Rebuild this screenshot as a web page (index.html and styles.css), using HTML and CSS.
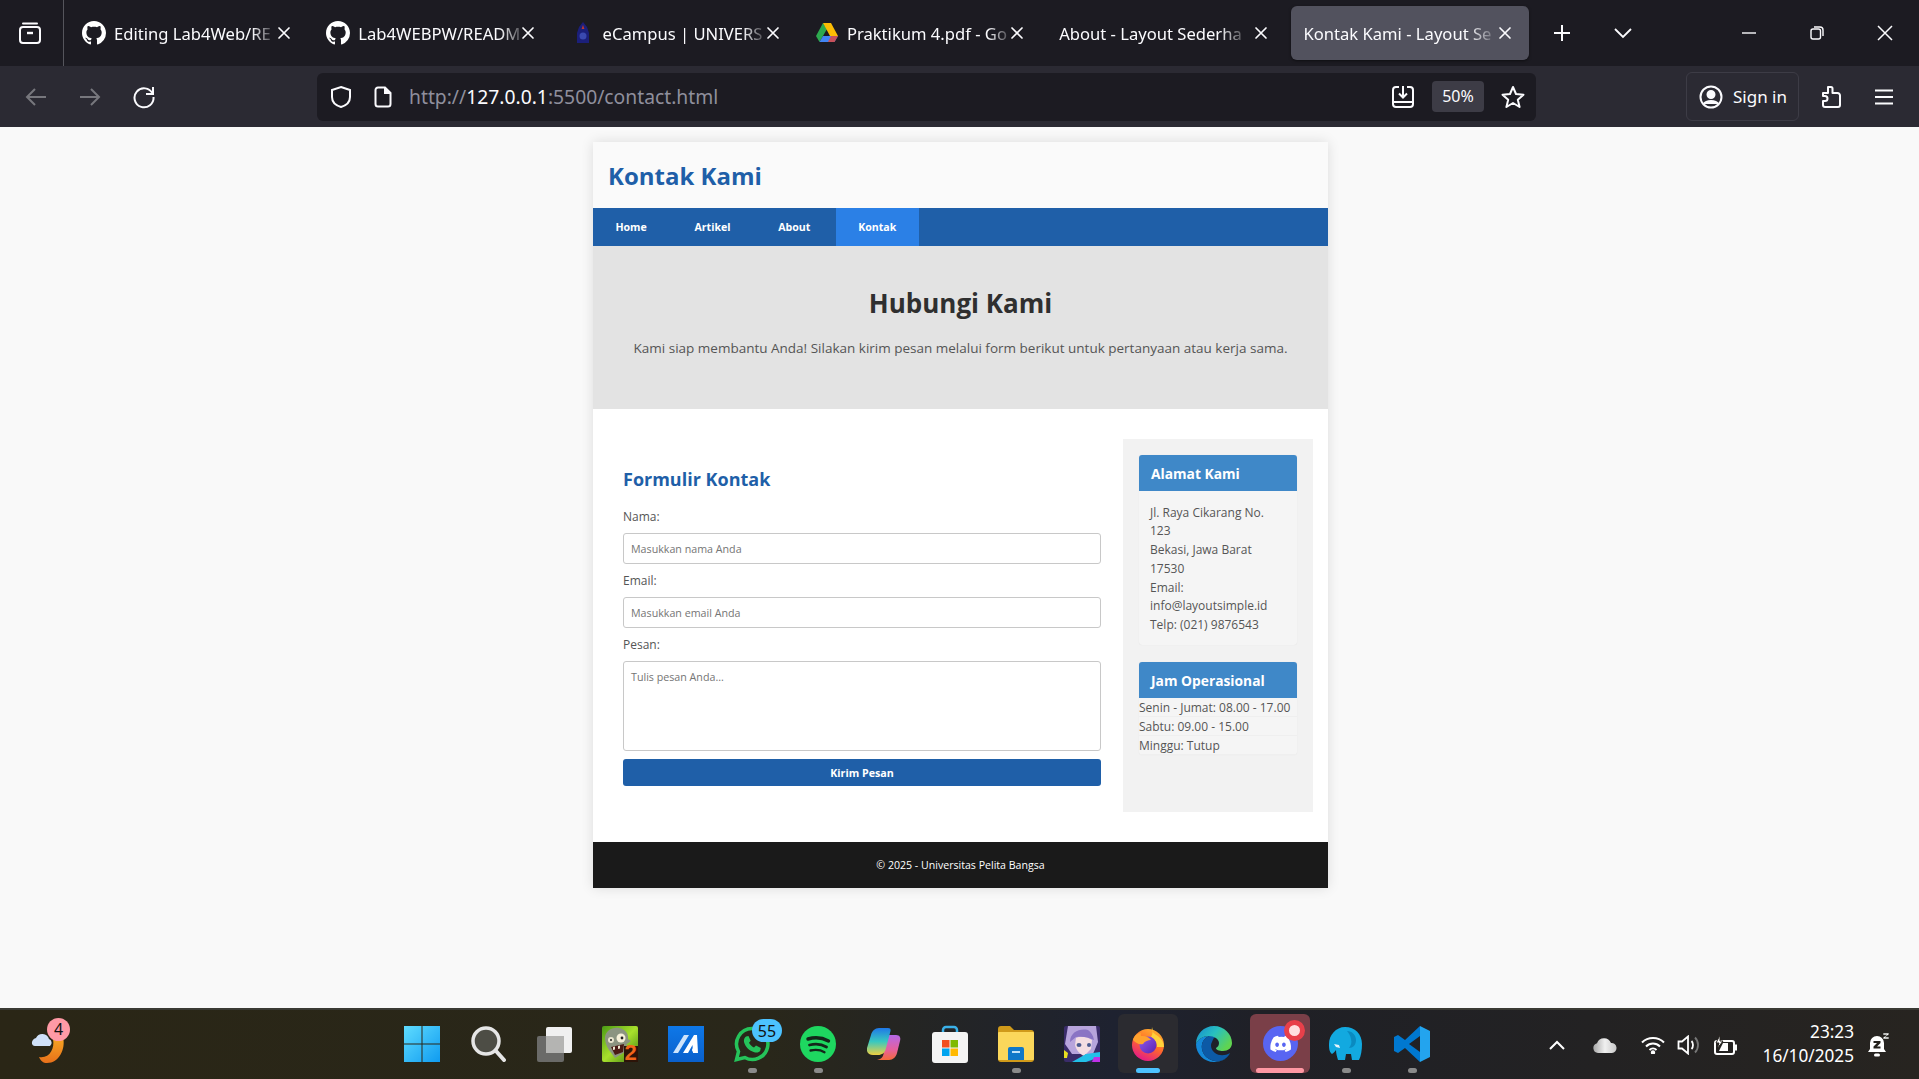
FILE: index.html
```html
<!DOCTYPE html>
<html lang="id">

<head>
    <meta charset="UTF-8">
    <meta name="viewport" content="width=device-width, initial-scale=1.0">
    <title>Kontak Kami - Layout Sederhana</title>
    <link rel="stylesheet" href="styles.css">
</head>

<body>
    <svg class="sprite" width="0" height="0">
        <symbol id="gh" viewBox="0 0 16 16">
            <path fill="#fff" d="M8 0C3.58 0 0 3.58 0 8c0 3.54 2.29 6.53 5.47 7.59.4.07.55-.17.55-.38 0-.19-.01-.82-.01-1.49-2.01.37-2.53-.49-2.69-.94-.09-.23-.48-.94-.82-1.13-.28-.15-.68-.52-.01-.53.63-.01 1.08.58 1.23.82.72 1.21 1.87.87 2.33.66.07-.52.28-.87.51-1.07-1.78-.2-3.64-.89-3.64-3.95 0-.87.31-1.59.82-2.15-.08-.2-.36-1.02.08-2.12 0 0 .67-.21 2.2.82.64-.18 1.32-.27 2-.27.68 0 1.36.09 2 .27 1.53-1.04 2.2-.82 2.2-.82.44 1.1.16 1.92.08 2.12.51.56.82 1.27.82 2.15 0 3.07-1.87 3.75-3.65 3.95.29.25.54.73.54 1.48 0 1.07-.01 1.93-.01 2.2 0 .21.15.46.55.38A8.013 8.013 0 0016 8c0-4.42-3.58-8-8-8z" />
        </symbol>
        <symbol id="x" viewBox="0 0 16 16">
            <path stroke="#fbfbfe" stroke-width="1.7" stroke-linecap="round" d="M3 3l10 10M13 3L3 13" />
        </symbol>
    </svg>

    <!-- Tab bar -->
    <div class="tabbar">
        <div class="tabbar-left">
            <svg width="24" height="24" viewBox="0 0 24 24" fill="none" stroke="#fbfbfe" stroke-width="2">
                <path d="M5 2.500h14" stroke-linecap="round" />
                <rect x="2" y="6" width="20" height="16" rx="3" />
                <path d="M9 12h6" stroke-width="2.400" />
            </svg>
        </div>
        <div class="tab">
            <svg class="favicon"><use href="#gh" /></svg>
            <span class="tab-title">Editing Lab4Web/RE</span>
            <svg class="tab-close"><use href="#x" /></svg>
        </div>
        <div class="tab">
            <svg class="favicon"><use href="#gh" /></svg>
            <span class="tab-title">Lab4WEBPW/READM</span>
            <svg class="tab-close"><use href="#x" /></svg>
        </div>
        <div class="tab">
            <svg class="favicon" viewBox="0 0 24 24">
                <path fill="#1b1f7a" d="M12 1l4 5 2 6v10H6V12l2-6z" />
                <path fill="#c0392b" d="M12 4l1.400 4h-2.800z" />
                <circle cx="12" cy="15" r="3.500" fill="#3a49b0" />
            </svg>
            <span class="tab-title">eCampus | UNIVERS</span>
            <svg class="tab-close"><use href="#x" /></svg>
        </div>
        <div class="tab">
            <svg class="favicon" viewBox="0 0 24 24">
                <path fill="#2da94f" d="M8 2L1 15l3.500 6L12 8z" />
                <path fill="#fbbc04" d="M8 2h8l7 13h-8z" />
                <path fill="#4285f4" d="M4.500 21h15L23 15H8z" />
                <path fill="#ea4335" d="M13 21h6.500L23 15h-7z" opacity=".8" />
            </svg>
            <span class="tab-title">Praktikum 4.pdf - Go</span>
            <svg class="tab-close"><use href="#x" /></svg>
        </div>
        <div class="tab">
            <span class="tab-title">About - Layout Sederha</span>
            <svg class="tab-close"><use href="#x" /></svg>
        </div>
        <div class="tab tab-active">
            <span class="tab-title">Kontak Kami - Layout Se</span>
            <svg class="tab-close"><use href="#x" /></svg>
        </div>
        <svg class="tab-plus" width="20" height="20" viewBox="0 0 20 20">
            <path stroke="#fbfbfe" stroke-width="2" d="M10 2v16M2 10h16" />
        </svg>
        <svg class="tab-chevron" width="20" height="20" viewBox="0 0 20 20" fill="none">
            <path stroke="#fbfbfe" stroke-width="1.800" d="M2 6l8 8 8-8" />
        </svg>
        <div class="window-controls">
            <svg width="16" height="16" viewBox="0 0 16 16"><path stroke="#fbfbfe" stroke-width="1.400" d="M1 8h14" /></svg>
            <svg width="16" height="16" viewBox="0 0 16 16" fill="none" stroke="#fbfbfe" stroke-width="1.400">
                <rect x="2" y="4" width="9.500" height="10" rx="2" />
                <path d="M5 2h6a3 3 0 0 1 3 3v6" />
            </svg>
            <svg width="16" height="16" viewBox="0 0 16 16"><path stroke="#fbfbfe" stroke-width="1.500" d="M1 1l14 14M15 1L1 15" /></svg>
        </div>
    </div>

    <!-- Toolbar -->
    <div class="toolbar">
        <div class="nav-buttons">
            <svg width="24" height="24" viewBox="0 0 24 24" fill="none" stroke="#77777d" stroke-width="2"><path d="M22 12H3M11 4l-8 8 8 8" /></svg>
            <svg width="24" height="24" viewBox="0 0 24 24" fill="none" stroke="#77777d" stroke-width="2"><path d="M2 12h19M13 4l8 8-8 8" /></svg>
            <svg width="24" height="24" viewBox="0 0 24 24" fill="none" stroke="#fbfbfe" stroke-width="2"><path d="M21 2v7h-7" /><path d="M20.500 8.500A9.500 9.500 0 1 0 21.500 12" /></svg>
        </div>
        <div class="urlbar">
            <svg class="url-shield" width="22" height="24" viewBox="0 0 22 24" fill="none" stroke="#fbfbfe" stroke-width="2">
                <path d="M11 2l9 3v7c0 5-4 8.500-9 10C6 20.500 2 17 2 12V5z" />
            </svg>
            <svg class="url-doc" width="18" height="22" viewBox="0 0 18 22" fill="none" stroke="#fbfbfe" stroke-width="2">
                <path d="M4 1.500h7l5.500 5.500v11a2.500 2.500 0 0 1-2.500 2.500H4A2.500 2.500 0 0 1 1.500 18V4A2.500 2.500 0 0 1 4 1.500z" />
                <path d="M11 1.500V7h5.500" fill="#fbfbfe" />
            </svg>
            <span class="url-text">http://<b>127.0.0.1</b>:5500/contact.html</span>
            <svg class="url-save" width="24" height="24" viewBox="0 0 24 24" fill="none" stroke="#fbfbfe" stroke-width="2">
                <path d="M8 2H5a3 3 0 0 0-3 3v14a3 3 0 0 0 3 3h14a3 3 0 0 0 3-3V5a3 3 0 0 0-3-3h-3" />
                <path d="M2 17h20" />
                <path d="M12 1v11M8 8.500l4 4 4-4" />
            </svg>
            <span class="zoom-chip">50%</span>
            <svg class="url-star" width="24" height="24" viewBox="0 0 24 24" fill="none" stroke="#fbfbfe" stroke-width="2" stroke-linejoin="round">
                <path d="M12 2l3 7 7.500.7-5.700 5 1.800 7.300L12 18l-6.600 4 1.800-7.300-5.700-5L9 9z" />
            </svg>
        </div>
        <div class="signin">
            <svg width="24" height="24" viewBox="0 0 24 24" fill="none" stroke="#fbfbfe" stroke-width="2">
                <circle cx="12" cy="12" r="10.500" />
                <circle cx="12" cy="9.500" r="3.500" fill="#fbfbfe" />
                <path d="M5 19c2-4 12-4 14 0" fill="#fbfbfe" />
            </svg>
            <span>Sign in</span>
        </div>
        <svg class="tool-ext" width="24" height="24" viewBox="0 0 24 24" fill="none" stroke="#fbfbfe" stroke-width="2" stroke-linejoin="round">
            <path d="M9 2h3a1.500 1.500 0 0 1 1.500 1.500V8h5A2.500 2.500 0 0 1 21 10.500V20a2 2 0 0 1-2 2H6a2 2 0 0 1-2-2v-4h2a2.500 2.500 0 0 0 0-5H4V8h5z" />
        </svg>
        <svg class="tool-menu" width="20" height="20" viewBox="0 0 20 20"><path stroke="#fbfbfe" stroke-width="2" d="M1 3.500h18M1 10h18M1 16.500h18" /></svg>
    </div>

    <!-- Halaman -->
    <div class="page">
        <div class="card">
            <header class="site-header">
                <h1>Kontak Kami</h1>
            </header>
            <nav class="site-nav">
                <a href="#">Home</a>
                <a href="#">Artikel</a>
                <a href="#">About</a>
                <a href="#" class="active">Kontak</a>
            </nav>
            <section class="hero">
                <h2>Hubungi Kami</h2>
                <p>Kami siap membantu Anda! Silakan kirim pesan melalui form berikut untuk pertanyaan atau kerja sama.</p>
            </section>
            <main class="content">
                <form class="contact-form">
                    <h3>Formulir Kontak</h3>
                    <label for="nama">Nama:</label>
                    <input type="text" id="nama" placeholder="Masukkan nama Anda">
                    <label for="email">Email:</label>
                    <input type="email" id="email" placeholder="Masukkan email Anda">
                    <label for="pesan">Pesan:</label>
                    <textarea id="pesan" placeholder="Tulis pesan Anda..."></textarea>
                    <button type="button">Kirim Pesan</button>
                </form>
                <aside class="sidebar">
                    <div class="widget">
                        <h4>Alamat Kami</h4>
                        <p class="widget-body">Jl. Raya Cikarang No. 123<br>Bekasi, Jawa Barat 17530<br>Email: info@layoutsimple.id<br>Telp: (021) 9876543</p>
                    </div>
                    <div class="widget">
                        <h4>Jam Operasional</h4>
                        <ul>
                            <li>Senin - Jumat: 08.00 - 17.00</li>
                            <li>Sabtu: 09.00 - 15.00</li>
                            <li>Minggu: Tutup</li>
                        </ul>
                    </div>
                </aside>
            </main>
            <footer class="site-footer">© 2025 - Universitas Pelita Bangsa</footer>
        </div>
    </div>

    <!-- Taskbar -->
    <div class="taskbar">
        <div class="task-weather">
            <svg width="36" height="42" viewBox="0 0 36 42">
                <defs>
                    <linearGradient id="sun" x1="0" y1="0" x2="0" y2="1">
                        <stop offset="0" stop-color="#f7a823" />
                        <stop offset="1" stop-color="#e8701a" />
                    </linearGradient>
                </defs>
                <path fill="url(#sun)" d="M33 14c3 12-4 26-16 26-4 0-6-2-8-6 10 2 16-8 14-18z" />
                <path fill="#cfe0f8" d="M2 21a5 5 0 0 1 4-6 7 7 0 0 1 13 1 4 4 0 0 1 1 7H5a3 3 0 0 1-3-2z" />
            </svg>
            <span class="badge badge-pink">4</span>
        </div>
        <div class="task-icons">
            <div class="task-item">
                <svg width="36" height="36" viewBox="0 0 36 36">
                    <defs>
                        <linearGradient id="win" x1="0" y1="0" x2="1" y2="1">
                            <stop offset="0" stop-color="#5fdcff" />
                            <stop offset="1" stop-color="#0f9bf0" />
                        </linearGradient>
                    </defs>
                    <path fill="url(#win)" d="M0 0h17.500v17.500H0zM18.500 0H36v17.500H18.500zM0 18.500h17.500V36H0zM18.500 18.500H36V36H18.500z" />
                </svg>
            </div>
            <div class="task-item">
                <svg width="36" height="36" viewBox="0 0 36 36">
                    <circle cx="16" cy="15" r="13" fill="#4d4d45" stroke="#e6e6e6" stroke-width="3.500" />
                    <path stroke="#e6e6e6" stroke-width="4" stroke-linecap="round" d="M26 25l8 9" />
                </svg>
            </div>
            <div class="task-item">
                <svg width="36" height="36" viewBox="0 0 36 36">
                    <rect x="1" y="10" width="27" height="26" rx="2" fill="#6a6a68" />
                    <rect x="10" y="1" width="26" height="26" rx="2" fill="#f0f0f0" />
                    <rect x="10" y="10" width="18" height="17" fill="#b4b4b2" />
                </svg>
            </div>
            <div class="task-item">
                <svg class="pvz" width="36" height="36" viewBox="0 0 36 36">
                    <defs>
                        <linearGradient id="pvz" x1="0" y1="0" x2="1" y2="1">
                            <stop offset="0" stop-color="#4a9a14" />
                            <stop offset=".5" stop-color="#a8e02c" />
                            <stop offset="1" stop-color="#3a7a10" />
                        </linearGradient>
                    </defs>
                    <rect width="36" height="36" rx="2" fill="url(#pvz)" />
                    <path fill="#8c9480" d="M3 12C3 5 10 1 17 2c6 1 10 6 9 11l3 2-4 3-2 8-10 6-6-8c-2-3-4-7-4-12z" />
                    <circle cx="19" cy="12" r="4.500" fill="#f6f0d8" /><circle cx="20" cy="12" r="1.400" fill="#222" />
                    <circle cx="9" cy="14" r="3" fill="#e8e4cc" /><circle cx="9" cy="14" r="1" fill="#222" />
                    <path fill="#4a1a14" d="M9 21l13-3-1 8-8 3z" />
                    <path fill="#f0e8d0" d="M11 21l2-.5v3l-2 .5zM16 20l2-.5v3l-2 .5z" />
                    <rect x="22" y="20" width="14" height="16" fill="#2c1408" />
                    <text class="pvz-two" x="22.500" y="34">2</text>
                </svg>
            </div>
            <div class="task-item">
                <svg width="36" height="36" viewBox="0 0 36 36">
                    <defs>
                        <linearGradient id="blue-app" x1="0" y1="0" x2="0" y2="1">
                            <stop offset="0" stop-color="#0e78e8" />
                            <stop offset="1" stop-color="#0a60cc" />
                        </linearGradient>
                    </defs>
                    <rect width="36" height="36" fill="url(#blue-app)" />
                    <path fill="#cfe4fb" d="M5 27L16 9h5L10 27z" />
                    <path fill="#fff" d="M15 27L26 9h3l1 18h-5l-.500-8L20 27z" />
                    <circle cx="26" cy="24" r="2" fill="#fff" />
                </svg>
            </div>
            <div class="task-item has-dot">
                <svg width="36" height="36" viewBox="0 0 36 36" fill="none">
                    <path stroke="#25c35a" stroke-width="3.500" d="M18 2.500A15.500 15.500 0 0 0 4.500 25.500L2.500 33.500l8.300-2A15.500 15.500 0 1 0 18 2.500z" />
                    <path fill="#25c35a" d="M12 10.500l2.500-.5 2.200 4.700-1.700 2c1 2 3 3.800 5 4.800l2-1.900 4.800 2.300-.5 2.600c-1 2-3.500 2.500-6 1.700-5-1.500-9-5.500-10.300-10.300-.5-2.200.5-4.300 2-5.400z" />
                </svg>
                <span class="badge badge-blue">55</span>
            </div>
            <div class="task-item has-dot">
                <svg width="36" height="36" viewBox="0 0 36 36" fill="none">
                    <circle cx="18" cy="18" r="18" fill="#1ed760" />
                    <g stroke="#14261a" stroke-linecap="round">
                        <path stroke-width="3.400" d="M8 13c7-2 14-1.500 20.500 2" />
                        <path stroke-width="2.800" d="M9.500 19c6-1.500 12-1 17 2" />
                        <path stroke-width="2.300" d="M10.500 24.500c5-1 10-.7 14 1.700" />
                    </g>
                </svg>
            </div>
            <div class="task-item">
                <svg width="34" height="32" viewBox="0 0 34 32">
                    <defs>
                        <linearGradient id="cop1" x1="0" y1="0" x2="0" y2="1">
                            <stop offset="0" stop-color="#1f78e8" />
                            <stop offset=".5" stop-color="#38c8c0" />
                            <stop offset="1" stop-color="#f0d040" />
                        </linearGradient>
                        <linearGradient id="cop2" x1="0" y1="0" x2="0" y2="1">
                            <stop offset="0" stop-color="#b468e8" />
                            <stop offset=".6" stop-color="#e8609a" />
                            <stop offset="1" stop-color="#f46a3a" />
                        </linearGradient>
                    </defs>
                    <path fill="url(#cop2)" d="M19 7h10c4 0 5 3 4 6l-3 12c-1 4-4 7-8 7H10c5-1 6-3 7-8l2-9c.500-3 0-6 0-8z" />
                    <path fill="url(#cop1)" d="M12 0h9c3 0 3 2 2 5l-4 15c-1 5-4 7-8 7H6c-4 0-7-3-6-7L4 7c1-4 4-7 8-7z" />
                </svg>
            </div>
            <div class="task-item">
                <svg width="36" height="38" viewBox="0 0 36 38">
                    <path fill="none" stroke="#3ab0e8" stroke-width="2.500" d="M11 9V5a3 3 0 0 1 3-3h8a3 3 0 0 1 3 3v4" />
                    <rect y="7" width="36" height="31" rx="3" fill="#f4f4f4" />
                    <path fill="#f25022" d="M10 15h7.500v7.500H10z" />
                    <path fill="#7fba00" d="M18.500 15H26v7.500h-7.500z" />
                    <path fill="#00a4ef" d="M10 23.500h7.500V31H10z" />
                    <path fill="#ffb900" d="M18.500 23.500H26V31h-7.500z" />
                </svg>
            </div>
            <div class="task-item has-dot">
                <svg width="36" height="36" viewBox="0 0 36 36">
                    <path fill="#d09a1a" d="M0 3a3 3 0 0 1 3-3h9l4 4h17a3 3 0 0 1 3 3v26a3 3 0 0 1-3 3H3a3 3 0 0 1-3-3z" />
                    <rect y="6" width="36" height="28" rx="1" fill="#fbd75b" />
                    <path fill="#0f78c8" d="M10 23a2 2 0 0 1 2-2h12a2 2 0 0 1 2 2v11H10z" />
                    <rect x="14" y="25" width="8" height="2" fill="#bfe2f8" />
                </svg>
            </div>
            <div class="task-item">
                <svg width="36" height="36" viewBox="0 0 36 36">
                    <rect width="36" height="36" rx="2" fill="#3a2c6a" />
                    <path fill="#b7a4dc" d="M4 0h28l2 16-5 12H8L1 18z" />
                    <path fill="#f3dde2" d="M12 12c4-2 10-2 16 2l-1 9-7 7c-4-2-8-6-9-11z" />
                    <path fill="#8a74c4" d="M6 16c0-10 10-14 18-12 3 2 5 5 6 10-6-3-11-4-18-3z" />
                    <ellipse cx="15" cy="19" rx="2.500" ry="2" fill="#4a5a90" />
                    <ellipse cx="25" cy="19" rx="2" ry="2" fill="#4a5a90" />
                    <path fill="#22c0e8" d="M8 36l14-8 14-2v5l-14 5z" />
                    <path fill="#e8e020" d="M0 24l4 3-1 5H0z" />
                    <path fill="#c030e8" d="M30 31h6v5h-8z" />
                </svg>
            </div>
            <div class="task-box task-running">
                <svg width="34" height="34" viewBox="0 0 34 34">
                    <defs>
                        <linearGradient id="fx" x1=".8" y1="0" x2=".3" y2="1">
                            <stop offset="0" stop-color="#ffb52e" />
                            <stop offset=".5" stop-color="#ff6a2a" />
                            <stop offset="1" stop-color="#e3168c" />
                        </linearGradient>
                        <linearGradient id="fx2" x1="0" y1="0" x2="1" y2="1">
                            <stop offset="0" stop-color="#8f5cf0" />
                            <stop offset="1" stop-color="#5b22b0" />
                        </linearGradient>
                    </defs>
                    <circle cx="17" cy="18" r="16" fill="url(#fx)" />
                    <path fill="#ffd23a" d="M21 0c-1 5 3 7 6.500 9.500C31 12 33 16 33 20h-7c0-5-3-8-6-10 2-3 2-7 1-10z" />
                    <circle cx="17" cy="18" r="8.500" fill="url(#fx2)" />
                    <path fill="#ffa22e" d="M2 13c1-4 4-7 8-7-.500 1-.500 2 0 3 4-.500 8 1 10 4-3 0-6 1-8 4-4 1-7-1-10-4z" />
                </svg>
                <span class="run-bar"></span>
            </div>
            <div class="task-item">
                <svg width="36" height="36" viewBox="0 0 36 36">
                    <defs>
                        <linearGradient id="ed1" x1="0" y1="0" x2="1" y2=".6">
                            <stop offset="0" stop-color="#1488d0" />
                            <stop offset=".5" stop-color="#28c0c0" />
                            <stop offset="1" stop-color="#60d450" />
                        </linearGradient>
                    </defs>
                    <path fill="#1488d8" d="M0 18c2-5 7-8 13-8-5 2-8 7-7 13 1 6 6 11 13 12 6 1 12-2 15-8-2 5-8 9-16 9C8 36 0 28 0 18z" />
                    <path fill="#0c5aa6" d="M13 10c-5 2-8 7-7 13 1 6 6 11 13 12 6 1 12-2 15-8-5 3-11 3-15 0-4-3-5-8-3-11 1-3 2-5 5-6-3-1-6-1-8 0z" />
                    <path fill="url(#ed1)" d="M0 18C0 8 8 0 18 0c10 0 18 8 18 17 0 5-4 8-9 8-4 0-7-1-7-3 2-1 3-3 3-5 0-4-5-7-10-7C7 10 2 13 0 18z" />
                </svg>
            </div>
            <div class="task-box task-alert">
                <svg width="35" height="35" viewBox="0 0 36 36">
                    <circle cx="18" cy="18" r="18" fill="#5865f2" />
                    <path fill="#fff" d="M27 11.500a17 17 0 0 0-4.500-1.400l-.6 1.200a15 15 0 0 0-5.800 0l-.6-1.200A17 17 0 0 0 11 11.500c-3 4.300-3.700 8.500-3.300 12.600a17 17 0 0 0 5.400 2.700l1.100-1.800-1.800-.9.400-.3c3.500 1.600 7.400 1.600 10.800 0l.4.300-1.800.9 1.100 1.800a17 17 0 0 0 5.400-2.700c.5-4.800-.7-9-3.300-12.600zM14.500 21.500c-1 0-1.900-1-1.900-2.200s.8-2.200 1.900-2.200 2 1 1.900 2.200c0 1.200-.8 2.200-1.900 2.200zm7 0c-1 0-1.900-1-1.900-2.200s.8-2.200 1.900-2.200 2 1 1.900 2.200c0 1.200-.8 2.200-1.900 2.200z" />
                </svg>
                <span class="badge badge-red"></span>
                <span class="run-bar"></span>
            </div>
            <div class="task-item has-dot">
                <svg width="34" height="34" viewBox="0 0 34 34">
                    <path fill="#12a9e0" d="M16 0c10 0 17 7 17 17 0 6-1 12-3 16h-7l-1-6h-5l-1 6H9c-1-3-2-7-2-10-1 1-2 3-4 4-3-2-3-7-3-10C0 8 7 0 16 0z" />
                    <path fill="#0a8ac0" d="M18 4c5 0 9 4 9 9s-3 8-7 8c2-3 3-5 2-9-.500-3-2-6-4-8z" />
                    <path fill="#e8f4fa" d="M5 17l5 1 1 3-4-1z" />
                </svg>
            </div>
            <div class="task-item has-dot">
                <svg width="36" height="36" viewBox="0 0 36 36">
                    <path fill="#0078d0" d="M26 0L11 14 4 9l-4 2v14l4 2 7-5 15 14V26L15 18 26 10z" />
                    <path fill="#23a4ee" d="M26 0l10 5v26l-10 5z" />
                </svg>
            </div>
        </div>
        <div class="task-tray">
            <svg class="tray-chevron" width="16" height="10" viewBox="0 0 16 10" fill="none"><path stroke="#fff" stroke-width="2" d="M1 9l7-7 7 7" /></svg>
            <svg class="tray-cloud" width="24" height="16" viewBox="0 0 24 16">
                <defs>
                    <linearGradient id="cloud" x1="0" y1="0" x2="1" y2="0">
                        <stop offset="0" stop-color="#a8a8a8" />
                        <stop offset=".5" stop-color="#f0f0f0" />
                        <stop offset="1" stop-color="#c8c8c8" />
                    </linearGradient>
                </defs>
                <path fill="url(#cloud)" d="M5 16a5 5 0 0 1-1-9.800A7.500 7.500 0 0 1 18 6a5 5 0 0 1 1 10z" />
            </svg>
            <svg class="tray-wifi" width="24" height="18" viewBox="0 0 24 18" fill="none" stroke="#fff" stroke-width="2">
                <path d="M1 6.500c6-6 16-6 22 0M5 10.500c4-4 10-4 14 0M8.500 14c2-2 5-2 7 0" />
                <circle cx="12" cy="16.500" r="1.200" fill="#fff" />
            </svg>
            <svg class="tray-vol" width="24" height="20" viewBox="0 0 24 20" fill="none" stroke="#fff" stroke-width="1.800">
                <path d="M1.500 6.500h3.500l6-5v17l-6-5H1.500z" />
                <path d="M14.500 6c2 2 2 6 0 8" />
                <path d="M18 2.500c4 4 4 11 0 15" stroke="#777" />
            </svg>
            <svg class="tray-batt" width="24" height="20" viewBox="0 0 24 20">
                <rect x="2" y="6" width="19" height="13" rx="2" fill="none" stroke="#fff" stroke-width="2" />
                <path fill="#fff" d="M22 9.500h2v6h-2zM10 8h5v8H6z" />
                <path fill="#fff" stroke="#24211c" d="M7 0L3 8h3l-2 6 6-8H7z" />
            </svg>
            <div class="tray-clock">
                <span>23:23</span>
                <span>16/10/2025</span>
            </div>
            <svg class="tray-bell" width="21" height="24" viewBox="0 0 21 24" fill="#fff">
                <path d="M9 3a7 7 0 0 0-7 7v6l-2 3h18l-2-3v-6a7 7 0 0 0-7-7z" />
                <rect x="6" y="20.500" width="6" height="3" rx="1.500" />
                <path d="M15 0h6v1.500L17.500 4H21v2h-6V4.500L18.500 2H15z" stroke="#24211c" stroke-width=".6" />
                <path d="M5.500 8h7v2L9 13.500h3.500v2h-7v-2L9 10H5.500z" fill="#24211c" />
            </svg>
        </div>
    </div>
</body>

</html>
```

FILE: styles.css
```css
* {
    box-sizing: border-box;
}

html,
body {
    height: 100%;
}

body {
    margin: 0;
    display: flex;
    flex-direction: column;
    overflow: hidden;
    font-family: "Open Sans", sans-serif;
}

.sprite {
    position: absolute;
}

/* Tab bar */
.tabbar {
    height: 66px;
    flex: none;
    display: flex;
    align-items: center;
    background: #1c1b22;
    color: #fbfbfe;
    font-family: "Noto Sans", sans-serif;
    font-size: 16.600px;
}

.tabbar-left {
    width: 64px;
    height: 100%;
    margin-right: 6px;
    display: flex;
    align-items: center;
    justify-content: center;
    padding-right: 4px;
    border-right: 1px solid #55555c;
}

.tab {
    width: 238px;
    height: 54px;
    margin-right: 6.300px;
    flex: none;
    display: flex;
    align-items: center;
    padding: 0 16px 0 12px;
    border-radius: 6px;
}

.tab-active {
    background: #52525e;
    box-shadow: 0 1px 3px rgba(0, 0, 0, 0.5);
}

.favicon {
    width: 24px;
    height: 24px;
    flex: none;
    margin-right: 8px;
}

.tab-title {
    min-width: 0;
    white-space: nowrap;
    -webkit-mask-image: linear-gradient(to right, #000 88%, rgba(0, 0, 0, 0.25) 100%);
    mask-image: linear-gradient(to right, #000 88%, rgba(0, 0, 0, 0.25) 100%);
}

.tab-close {
    width: 16px;
    height: 16px;
    flex: none;
    margin-left: auto;
}

.tab-plus {
    margin-left: 16px;
    flex: none;
}

.tab-chevron {
    margin-left: 41px;
    flex: none;
}

.window-controls {
    margin-left: auto;
    padding-right: 26px;
    display: flex;
    gap: 52px;
}

/* Toolbar */
.toolbar {
    height: 61px;
    flex: none;
    display: flex;
    align-items: center;
    background: #2b2a33;
    color: #fbfbfe;
    font-family: "Noto Sans", sans-serif;
}

.nav-buttons {
    width: 317px;
    flex: none;
    display: flex;
    gap: 30px;
    padding-left: 24px;
}

.urlbar {
    width: 1219px;
    height: 48px;
    flex: none;
    display: flex;
    align-items: center;
    padding: 0 11px 0 13px;
    background: #1c1b22;
    border-radius: 6px;
}

.url-doc {
    margin-left: 22px;
    flex: none;
}

.url-text {
    margin-left: 17px;
    flex: 1;
    font-size: 19.300px;
    color: #8f8f9d;
}

.url-text b {
    font-weight: 400;
    color: #fbfbfe;
}

.zoom-chip {
    width: 52px;
    height: 31px;
    margin: 0 17px 0 17px;
    background: #3d3c46;
    border-radius: 4px;
    font-size: 16px;
    line-height: 31px;
    text-align: center;
}

.signin {
    width: 113px;
    height: 49px;
    margin-left: 150px;
    flex: none;
    display: flex;
    align-items: center;
    gap: 10px;
    padding-left: 12px;
    border: 1px solid #3d3c46;
    border-radius: 6px;
    font-size: 17px;
}

.tool-ext {
    margin-left: 20px;
    flex: none;
}

.tool-menu {
    margin-left: 31px;
    flex: none;
}

/* Halaman */
.page {
    flex: 1;
    min-height: 0;
    background: #f9f9f9;
    padding-top: 15px;
}

.card {
    width: 735px;
    margin: 0 0 0 593px;
    background: #fff;
    box-shadow: 0 0 12px rgba(0, 0, 0, 0.12);
}

.site-header {
    height: 66px;
    padding: 0 15px;
    display: flex;
    align-items: center;
    background: #fafafa;
}

h1 {
    margin: 0;
    font-size: 24px;
    font-weight: 700;
    color: #1f5fa8;
}

.site-nav {
    height: 38px;
    display: flex;
    gap: 3px;
    background: #1f5fa8;
}

.site-nav a {
    padding: 0 22.400px;
    font-size: 10.600px;
    font-weight: 700;
    line-height: 38px;
    color: #fff;
    text-decoration: none;
}

.site-nav a.active {
    background: #2b80e6;
}

.hero {
    height: 163px;
    padding-top: 39px;
    background: #e3e3e3;
    text-align: center;
}

.hero h2 {
    margin: 0 0 17px;
    font-size: 26px;
    line-height: 36px;
    font-weight: 700;
    color: #2f2f2f;
}

.hero p {
    margin: 0;
    font-size: 13.500px;
    line-height: 20px;
    color: #555;
}

.content {
    display: flex;
    gap: 22px;
    padding: 30px 15px 30px 30px;
}

.contact-form {
    flex: 1;
    display: flex;
    flex-direction: column;
    padding-top: 27px;
}

.contact-form h3 {
    margin: 0 0 16px;
    font-size: 18px;
    line-height: 26px;
    font-weight: 700;
    color: #1f5fa8;
}

.contact-form label {
    margin-bottom: 8px;
    font-size: 12px;
    line-height: 17px;
    color: #555;
}

.contact-form input,
.contact-form textarea {
    width: 100%;
    margin-bottom: 8px;
    padding: 8px 7px;
    font-family: inherit;
    font-size: 10.700px;
    background: #fff;
    border: 1px solid #c8c8c8;
    border-radius: 3px;
    outline: none;
    resize: none;
}

.contact-form input {
    height: 31px;
}

.contact-form textarea {
    height: 90px;
}

.contact-form ::placeholder {
    color: #757575;
}

.contact-form button {
    height: 27px;
    padding: 0;
    font-family: inherit;
    font-size: 10.700px;
    font-weight: 700;
    color: #fff;
    background: #1f5fa8;
    border: 0;
    border-radius: 3px;
}

.sidebar {
    width: 190px;
    height: 373px;
    flex: none;
    padding: 16px;
    background: #f2f2f2;
}

.widget {
    margin-bottom: 17px;
    background: #f5f5f5;
    border-radius: 3px;
    box-shadow: 0 0 1px rgba(0, 0, 0, 0.1);
    font-size: 12px;
    color: #555;
}

.widget h4 {
    margin: 0;
    height: 36px;
    padding-left: 12px;
    font-size: 13.800px;
    font-weight: 700;
    line-height: 38px;
    color: #fff;
    background: #3f88c8;
    border-radius: 3px 3px 0 0;
}

.widget-body {
    margin: 0;
    padding: 12.500px 11px 10px;
    line-height: 18.800px;
}

.widget ul {
    margin: 0;
    padding: 0;
    list-style: none;
}

.widget li {
    height: 19px;
    line-height: 19px;
    border-bottom: 1px solid #efefef;
    white-space: nowrap;
}

.site-footer {
    height: 46px;
    font-size: 10.600px;
    line-height: 46px;
    text-align: center;
    color: #fff;
    background: #1a1a1a;
}

/* Taskbar */
.taskbar {
    height: 71px;
    flex: none;
    display: grid;
    grid-template-columns: 389px auto 1fr;
    align-items: center;
    border-top: 2px solid #3a3a34;
    background: linear-gradient(to right, #2a2616 0%, #29271a 40%, #1e2230 58%, #1f2026 66%, #272420 100%);
    color: #fff;
    font-family: "Noto Sans", sans-serif;
}

.task-weather {
    position: relative;
    width: 36px;
    height: 42px;
    margin: -2px 0 0 30px;
}

.task-icons {
    display: flex;
}

.task-item {
    position: relative;
    width: 66px;
    height: 69px;
    padding-bottom: 1px;
    display: flex;
    align-items: center;
    justify-content: center;
}

.has-dot::after {
    content: "";
    position: absolute;
    left: 29px;
    bottom: 6px;
    width: 9px;
    height: 5px;
    border-radius: 3px;
    background: #8a8a8a;
}

.pvz {
    overflow: visible;
}

.pvz-two {
    font-family: "Liberation Sans", sans-serif;
    font-size: 22px;
    font-weight: 700;
    fill: #f0651a;
}

.task-box {
    position: relative;
    width: 60px;
    height: 59px;
    margin: 4px 3px 6px;
    display: flex;
    align-items: center;
    justify-content: center;
    border-radius: 6px;
}

.task-running {
    background: #2b2b30;
}

.task-alert {
    background: #7a3f48;
}

.run-bar {
    position: absolute;
    left: 50%;
    bottom: 0;
    width: 24px;
    height: 5px;
    margin-left: -12px;
    border-radius: 3px;
    background: #4cc2ff;
}

.task-alert .run-bar {
    width: 48px;
    margin-left: -24px;
    background: #ff97a3;
}

.badge {
    position: absolute;
    display: flex;
    align-items: center;
    justify-content: center;
    color: #111;
    font-size: 16px;
}

.badge-pink {
    top: -5px;
    right: -4px;
    width: 23px;
    height: 23px;
    border-radius: 50%;
    background: #ff9aa6;
}

.badge-blue {
    top: 9px;
    right: 3px;
    width: 30px;
    height: 23px;
    border-radius: 12px;
    background: #4cc2ff;
}

.badge-red {
    top: 6px;
    right: 5px;
    width: 21px;
    height: 21px;
    border-radius: 50%;
    border: 5px solid #e8404a;
    background: #ffe0e0;
}

.task-tray {
    display: flex;
    align-items: center;
    height: 100%;
    padding-left: 104px;
}

.tray-cloud {
    margin-left: 28px;
}

.tray-wifi {
    margin-left: 24px;
}

.tray-vol {
    margin-left: 12px;
}

.tray-batt {
    margin-left: 12px;
}

.tray-clock {
    width: 117px;
    display: flex;
    flex-direction: column;
    align-items: flex-end;
    font-size: 17.200px;
    line-height: 24px;
    margin-bottom: 2px;
}

.tray-bell {
    margin-left: 14px;
}
```
